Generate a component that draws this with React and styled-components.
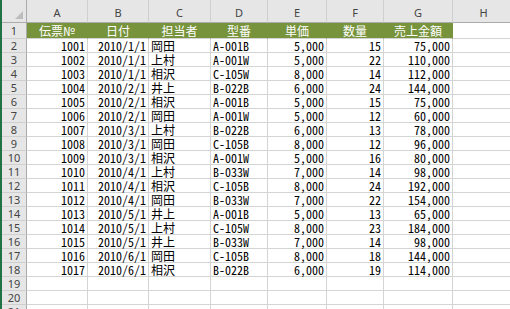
import React from "react";
import styled, { createGlobalStyle } from "styled-components";

const Global = createGlobalStyle`
  html, body { margin: 0; padding: 0; background: #ffffff; overflow: hidden; }
  #root { width: 510px; height: 309px; overflow: hidden; }
`;

const GRID = "#d4d4d4";
const HEAD_BG = "#e6e6e6";
const HEAD_LINE = "#ababab";
const GREEN = "#77933c";

const Frame = styled.div`
  display: flex;
  width: 510px;
  height: 309px;
  overflow: hidden;
  border-left: 2px solid #217346;
  box-sizing: border-box;
`;

const Sheet = styled.div`
  display: grid;
  grid-template-columns: 25px 61px 61px 62px 57px 59px 57px 69px 62px;
  grid-template-rows: 23px 16px repeat(20, 14px);
  flex: none;
`;

const Corner = styled.div`
  position: relative;
  background: ${HEAD_BG};
  border-right: 1px solid ${HEAD_LINE};
  border-bottom: 1px solid ${HEAD_LINE};
  box-sizing: border-box;
  &::after {
    content: "";
    position: absolute;
    right: 3px;
    bottom: 3px;
    width: 0;
    height: 0;
    border-left: 8px solid transparent;
    border-bottom: 8px solid #bdbdbd;
  }
`;

const ColHead = styled.div`
  background: ${HEAD_BG};
  border-right: 1px solid #cfcfcf;
  border-bottom: 1px solid ${HEAD_LINE};
  box-sizing: border-box;
  display: flex;
  align-items: center;
  justify-content: center;
  padding-top: 2px;
  font-family: "Noto Sans", "Liberation Sans", sans-serif;
  font-size: 11px;
  color: #444444;
`;

const RowHead = styled.div`
  background: ${HEAD_BG};
  border-right: 1px solid ${HEAD_LINE};
  border-bottom: 1px solid #cfcfcf;
  box-sizing: border-box;
  display: flex;
  align-items: center;
  justify-content: center;
  font-family: "Noto Sans", "Liberation Sans", sans-serif;
  font-size: 11px;
  line-height: 1;
  color: #444444;
`;

const Cell = styled.div`
  background: ${(p) => (p.$head ? GREEN : "#ffffff")};
  color: ${(p) => (p.$head ? "#ffffff" : "#000000")};
  border-right: 1px solid ${(p) => (p.$head ? GREEN : GRID)};
  border-bottom: 1px solid ${GRID};
  box-sizing: border-box;
  display: flex;
  align-items: center;
  justify-content: ${(p) =>
    p.$align === "right" ? "flex-end" : p.$align === "center" ? "center" : "flex-start"};
  padding: 0 2px 0 2px;
  white-space: nowrap;
  font-family: "Noto Sans Mono CJK JP", "Noto Sans CJK JP", sans-serif;
  font-size: 12px;
  line-height: 1;
`;

const letters = ["A", "B", "C", "D", "E", "F", "G", "H"];
const headers = ["伝票№", "日付", "担当者", "型番", "単価", "数量", "売上金額"];

const rows = [
  [1001, "2010/1/1", "岡田", "A-001B", "5,000", 15, "75,000"],
  [1002, "2010/1/1", "上村", "A-001W", "5,000", 22, "110,000"],
  [1003, "2010/1/1", "相沢", "C-105W", "8,000", 14, "112,000"],
  [1004, "2010/2/1", "井上", "B-022B", "6,000", 24, "144,000"],
  [1005, "2010/2/1", "相沢", "A-001B", "5,000", 15, "75,000"],
  [1006, "2010/2/1", "岡田", "A-001W", "5,000", 12, "60,000"],
  [1007, "2010/3/1", "上村", "B-022B", "6,000", 13, "78,000"],
  [1008, "2010/3/1", "岡田", "C-105B", "8,000", 12, "96,000"],
  [1009, "2010/3/1", "相沢", "A-001W", "5,000", 16, "80,000"],
  [1010, "2010/4/1", "上村", "B-033W", "7,000", 14, "98,000"],
  [1011, "2010/4/1", "相沢", "C-105B", "8,000", 24, "192,000"],
  [1012, "2010/4/1", "岡田", "B-033W", "7,000", 22, "154,000"],
  [1013, "2010/5/1", "井上", "A-001B", "5,000", 13, "65,000"],
  [1014, "2010/5/1", "上村", "C-105W", "8,000", 23, "184,000"],
  [1015, "2010/5/1", "井上", "B-033W", "7,000", 14, "98,000"],
  [1016, "2010/6/1", "岡田", "C-105B", "8,000", 18, "144,000"],
  [1017, "2010/6/1", "相沢", "B-022B", "6,000", 19, "114,000"],
];

const aligns = ["right", "right", "left", "left", "right", "right", "right"];

export default function App() {
  const emptyRows = [19, 20, 21];
  return (
    <>
      <Global />
      <Frame>
        <Sheet>
          <Corner />
          {letters.map((l) => (
            <ColHead key={l}>{l}</ColHead>
          ))}
          <RowHead>1</RowHead>
          {headers.map((h) => (
            <Cell key={h} $head $align="center">
              {h}
            </Cell>
          ))}
          <Cell />
          {rows.map((r, i) => (
            <React.Fragment key={r[0]}>
              <RowHead>{i + 2}</RowHead>
              {r.map((v, j) => (
                <Cell key={j} $align={aligns[j]}>
                  {v}
                </Cell>
              ))}
              <Cell />
            </React.Fragment>
          ))}
          {emptyRows.map((n) => (
            <React.Fragment key={n}>
              <RowHead>{n}</RowHead>
              {letters.map((l) => (
                <Cell key={l} />
              ))}
            </React.Fragment>
          ))}
        </Sheet>
      </Frame>
    </>
  );
}
